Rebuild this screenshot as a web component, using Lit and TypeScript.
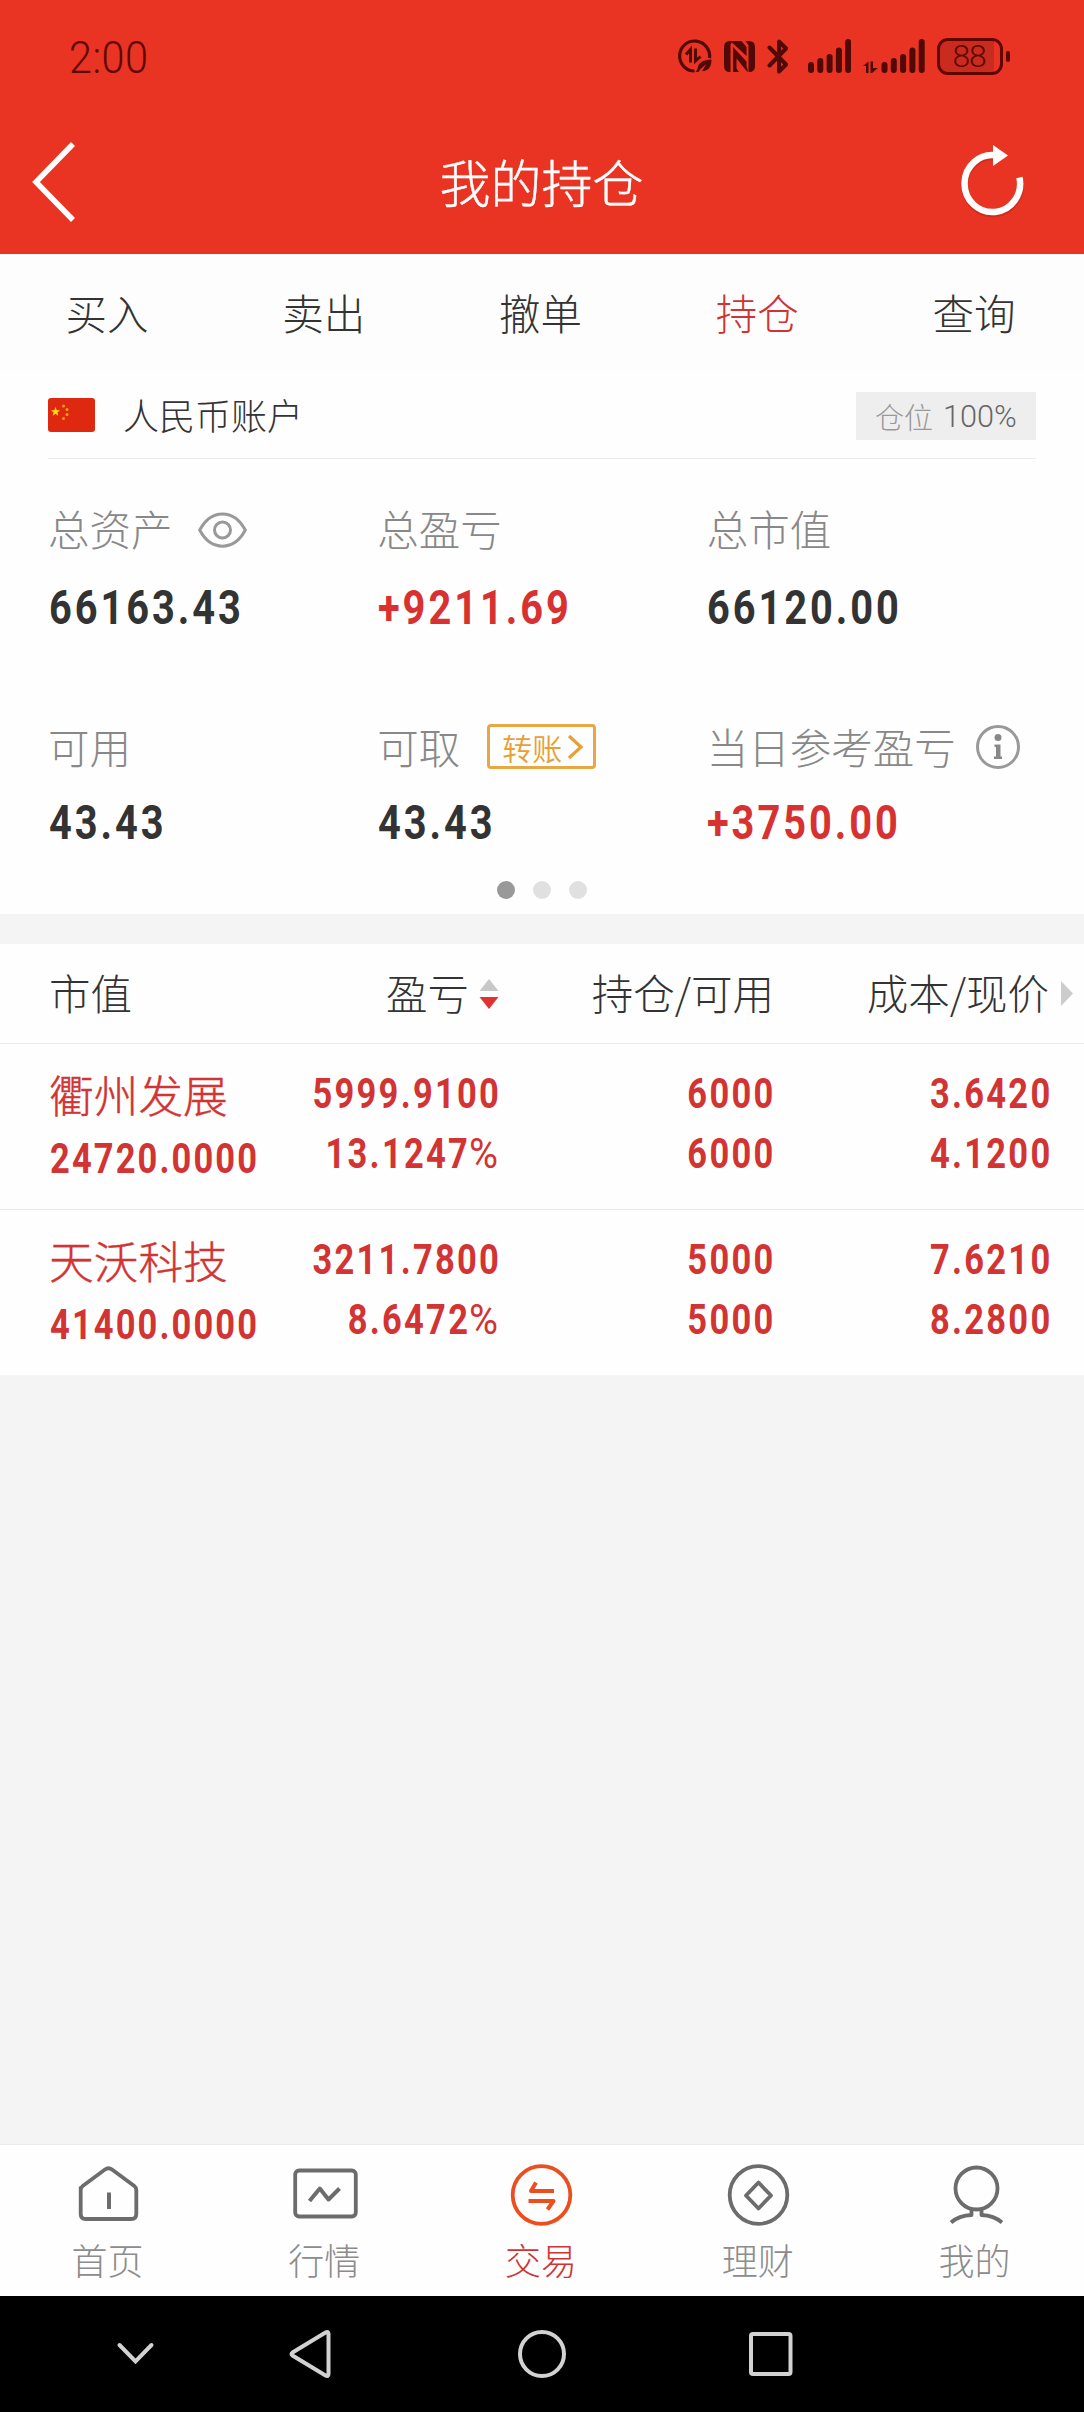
import { LitElement, html, css, svg } from "lit";
import { customElement } from "lit/decorators.js";
import { classMap } from "lit/directives/class-map.js";

interface Holding {
  name: string;
  value: string;
  profit: string;
  rate: string;
  held: string;
  usable: string;
  cost: string;
  price: string;
}

const HOLDINGS: Holding[] = [
  { name: "衢州发展", value: "24720.0000", profit: "5999.9100", rate: "13.1247", held: "6000", usable: "6000", cost: "3.6420", price: "4.1200" },
  { name: "天沃科技", value: "41400.0000", profit: "3211.7800", rate: "8.6472", held: "5000", usable: "5000", cost: "7.6210", price: "8.2800" },
];

const TABS = ["买入", "卖出", "撤单", "持仓", "查询"];

const BARS = [
  [0, 23], [9.3, 19], [18.6, 15], [27.9, 8.5], [37.2, 0],
];
const bars = svg`${BARS.map(([x, y]) => svg`<rect x=${x} y=${y} width="6" height=${34 - y} rx="3"/>`)}`;

const NAV = [
  {
    label: "首页",
    icon: svg`<path d="M6.700 25.500 V53 Q6.700 58 11.700 58 H57.300 Q62.300 58 62.300 53 V29 Q62.300 26.500 60.300 25 L38 8.500 Q34.500 6 31 8.500 L8.700 25 Q6.700 26.500 6.700 29"/><path d="M35 31.500V48" stroke-width="4"/>`,
  },
  {
    label: "行情",
    icon: svg`<rect x="4.200" y="9.500" width="60.600" height="46" rx="4"/><path d="M18.500 40 L28.800 27.500 L37.500 38.500 L48.500 27.500" stroke-width="4"/>`,
  },
  {
    label: "交易",
    icon: svg`<circle cx="34.500" cy="34" r="28.800"/><path d="M47 30H24L29 21.500M21.500 40H46.500L40.500 48.500" stroke-width="4"/>`,
  },
  {
    label: "理财",
    icon: svg`<circle cx="34.500" cy="34" r="28.800"/><path d="M34.500 21.500L47 34.500L34.500 47.500L22 34.500Z"/>`,
  },
  {
    label: "我的",
    icon: svg`<circle cx="35.500" cy="27.500" r="21"/><path d="M30.500 48.500V54Q18 54.500 10 61.500M40.500 48.500V54Q53 54.500 61 61.500"/>`,
  },
];

@customElement("app-root")
export class AppRoot extends LitElement {
  static styles = css`
    :host {
      display: flex;
      flex-direction: column;
      width: 1084px;
      height: 2412px;
      overflow: hidden;
      background: #f4f4f4;
      color: #333;
      font-family: "Noto Sans CJK SC", sans-serif;
      font-weight: 300;
      font-size: 41.500px;
    }
    * { box-sizing: border-box; }
    svg { display: block; flex: none; }
    .top { background: #e93423; height: 254px; flex: none; }
    .status {
      height: 112px;
      padding: 0 74px 0 69px;
      display: flex;
      align-items: center;
      color: #510905;
    }
    .clock {
      font: 300 45px/50px Roboto, sans-serif;
      letter-spacing: 0.500px;
      color: #600500;
      transform: scaleX(0.92);
      transform-origin: 0 50%;
      margin-right: auto;
      padding-top: 4px;
    }
    .status svg { fill: currentColor; }
    .s-data { margin-right: 12px; }
    .s-nfc { margin-right: 12px; }
    .s-bt { margin-right: 19px; }
    .s-sig { margin-right: 12px; }
    .s-sig2 { margin-right: 12px; }
    .bat { display: flex; align-items: center; }
    .cell {
      width: 66px;
      height: 37px;
      border: 3px solid #600500;
      border-radius: 11px;
      background: linear-gradient(90deg, #c92c1f 54px, transparent 54px);
      font: 300 32px/31px Roboto, sans-serif;
      text-align: center;
      color: #600500;
      letter-spacing: -1.200px;
      padding-right: 2px;
    }
    .nub { width: 4px; height: 11px; border-radius: 2px; background: #600500; margin-left: 3px; }
    .title {
      height: 142px;
      display: flex;
      align-items: center;
      justify-content: space-between;
      padding: 0 57px 0 30px;
      color: #fff;
    }
    .title h1 { margin: 0 0 0 19px; font-size: 51px; font-weight: 300; -webkit-text-stroke: 0.400px; line-height: 60px; padding-bottom: 5px; }
    .reload { margin-bottom: 4px; }
    .back { margin-right: 29px; margin-bottom: 2px; }
    .tabs { display: flex; height: 118px; background: #fdfdfd; flex: none; }
    .tabs div { flex: 1; text-align: center; line-height: 117px; padding-right: 3px; }
    .on { color: #cf3434; }
    .panel { background: #fefefe; padding: 0 48px; height: 542px; flex: none; }
    .acct { height: 87px; display: flex; align-items: center; border-bottom: 1px solid #ebebeb; }
    .acct b { font-weight: 300; font-size: 36px; margin-left: 28px; padding-bottom: 3px; }
    .tag {
      margin-left: auto;
      margin-top: 1px;
      width: 180px;
      height: 48px;
      background: #eee;
      color: #999;
      font-size: 29px;
      line-height: 44px;
      padding-left: 19px;
      display: flex;
      align-items: center;
      gap: 10px;
    }
    .tag i {
      font: 300 32px/48px Roboto, sans-serif;
      color: #666;
      transform: scaleX(0.96);
      transform-origin: 0 50%;
    }
    .grid { display: grid; grid-template-columns: repeat(3, 1fr); padding-top: 40px; }
    .stat { height: 216px; white-space: nowrap; }
    .lbl { height: 60px; display: flex; align-items: center; color: #888; line-height: 54px; }
    .lbl > span { padding-bottom: 2px; }
    .num {
      font: 700 48.500px/56px Roboto, sans-serif;
      letter-spacing: 3.600px;
      transform: scaleX(0.82);
      transform-origin: 0 50%;
      margin: 21px 0 0 0.500px;
    }
    .stat.low .lbl { padding-top: 3px; }
    .stat.low .num { margin-top: 20px; }
    .up { color: #d83131; }
    .eye { margin: 1px 0 0 25px; }
    .info { margin-left: 19px; }
    .transfer {
      margin-left: 27px;
      width: 109px;
      height: 45px;
      border: 3px solid #e6a744;
      border-radius: 4px;
      color: #e8a033;
      font-size: 30px;
      font-weight: 350;
      line-height: 36px;
      display: flex;
      align-items: center;
      padding-left: 12px;
      gap: 5px;
    }
    .dots { display: flex; gap: 18px; justify-content: center; margin-top: -50px; }
    .dots span { width: 18px; height: 18px; border-radius: 50%; background: #e0e0e0; }
    .dots span:first-child { background: #999; }
    .table { margin-top: 30px; background: #fefefe; flex: none; }
    .row { display: grid; grid-template-columns: 250px 200px 275px 276px; padding-left: 49px; }
    .item > div { display: flex; flex-direction: column; align-items: flex-end; }
    .item > div:first-child { align-items: flex-start; }
    .head { height: 100px; border-bottom: 1px solid #ebebeb; line-height: 92px; white-space: nowrap; }
    .head > div { display: flex; align-items: center; justify-content: flex-end; }
    .head > div > span { padding-bottom: 3px; }
    .head > div:first-child { justify-content: flex-start; }
    .sort { margin-left: 10px; }
    .more { margin: 0 -24px 0 12px; }
    .item { height: 165px; color: #d23333; padding-top: 20px; }
    .item + .item { height: 166px; border-top: 1px solid #ebebeb; }
    .name { font-size: 44.700px; -webkit-text-stroke: 0.400px; line-height: 60px; height: 65px; }
    .fig {
      font: 700 42px/60px Roboto, sans-serif;
      letter-spacing: 2.800px;
      margin-right: -2px;
      transform: scaleX(0.82);
      transform-origin: 100% 50%;
      white-space: nowrap;
    }
    .fig.left { transform-origin: 0 50%; margin-left: 0.500px; letter-spacing: 2.600px; }
    .fig em {
      display: inline-block;
      font-style: normal;
      font-weight: 400;
      transform: scaleX(1.15);
      transform-origin: 100% 50%;
      margin-left: 4px;
    }
    .nav { margin-top: auto; height: 152px; border-top: 1px solid #eaeaea; background: #fefefe; display: flex; flex: none; }
    .nav > div { flex: 1; display: flex; flex-direction: column; align-items: center; padding-top: 16px; font-size: 36px; color: #8c8c8c; }
    .nav svg { fill: none; stroke: #6c6c6c; stroke-width: 3.800; }
    .nav .on { color: #cf3434; }
    .nav .on svg { stroke: #eb4f20; }
    .nav span { line-height: 54px; margin: 1px 2px 0 0; }
    .sys { height: 116px; background: #000; flex: none; display: flex; align-items: center; padding-left: 115px; }
    .sys svg { fill: none; stroke: #d2d2d2; stroke-width: 4; }
    .s1 { margin-right: 132px; }
    .s2 { margin-right: 184px; }
    .s3 { margin-right: 179px; }
  `;

  private fig(text: string, unit = "") {
    return html`<div class="fig">${text}${unit ? html`<em>${unit}</em>` : ""}</div>`;
  }

  render() {
    return html`
      <div class="top">
        <div class="status">
          <span class="clock">2:00</span>
          <svg class="s-data" width="34" height="34" viewBox="0 0 34 34">
            <path d="M31.500 19A15 15 0 1 0 16.500 32" fill="none" stroke="currentColor" stroke-width="3.200"/>
            <path d="M8 15.500L12.500 10.500V23.500M17.500 9.500V22L22.500 17.500" fill="none" stroke="currentColor" stroke-width="3"/>
            <path d="M33.500 20.500C25 21 20 23.500 19.500 30L17.500 33H20.500L22.500 30L28.500 25L24 32C31 32.500 33.500 27 33.500 20.500Z"/>
          </svg>
          <svg class="s-nfc" width="31" height="31" viewBox="0 0 31 31">
            <path d="M6 0H17.500L22.500 6V15L8 1.500L6.500 3V31H6Q0 31 0 25V6Q0 0 6 0ZM21.500 0H25Q31 0 31 6V25Q31 31 25 31H24.500V4ZM9 6L22.500 20.500V25L24 30.500H23L12.500 17.500V27.500L15 31H9Z"/>
          </svg>
          <svg class="s-bt" width="22" height="35" viewBox="0 0 22 35">
            <path d="M2.500 8.500L19 25.500L12 32.500V2.500L19 9.500L2.500 26.500" fill="none" stroke="currentColor" stroke-width="4" stroke-linejoin="round" stroke-linecap="round"/>
          </svg>
          <svg class="s-sig" width="43" height="34" viewBox="0 0 43 34">${bars}</svg>
          <svg class="s-sig2" width="62" height="34" viewBox="0 0 62 34">
            <path d="M0 27L5.500 22.500V34H3V27ZM7.500 22.500H10V29H15L9 34H7.500Z"/>
            <g transform="translate(18.500 0)">${bars}</g>
          </svg>
          <div class="bat"><div class="cell">88</div><div class="nub"></div></div>
        </div>
        <div class="title">
          <svg class="back" width="48" height="84" viewBox="0 0 48 84">
            <path d="M43 4L6 42L43 80" fill="none" stroke="#fff" stroke-width="5.500"/>
          </svg>
          <h1>我的持仓</h1>
          <svg class="reload" width="70" height="76" viewBox="0 0 70 76">
            <path d="M64 35.500A28 28.500 0 1 1 41 13.500" transform="translate(-1 1)" fill="none" stroke="#a91b10" stroke-opacity=".35" stroke-width="6.500"/>
            <path d="M63.500 34.500A27.800 28.500 0 1 1 40 12.300" transform="translate(-1 0)" fill="none" stroke="#fff" stroke-width="6.500"/>
            <path d="M36 2L51 12.500L36 23Z" fill="#fff"/>
          </svg>
        </div>
      </div>

      <div class="tabs">
        ${TABS.map((t) => html`<div class=${classMap({ on: t === "持仓" })}>${t}</div>`)}
      </div>

      <div class="panel">
        <div class="acct">
          <svg width="47" height="34" viewBox="0 0 47 34">
            <rect width="47" height="34" rx="3" fill="#de2910"/>
            <path d="M7.500 9L8.700 12.300H12L9.400 14.400L10.300 17.800L7.500 15.800L4.700 17.800L5.600 14.400L3 12.300H6.300Z" fill="#ffde00"/>
            <g fill="#f0a010"><circle cx="15.500" cy="8" r="1.500"/><circle cx="19" cy="11.500" r="1.500"/><circle cx="19" cy="16.500" r="1.500"/><circle cx="15.500" cy="20.500" r="1.500"/></g>
          </svg>
          <b>人民币账户</b>
          <div class="tag">仓位<i>100%</i></div>
        </div>
        <div class="grid">
          <div class="stat">
            <div class="lbl"><span>总资产</span>
              <svg class="eye" width="49" height="36" viewBox="0 0 49 36" fill="none" stroke="#999" stroke-width="3">
                <path d="M1.700 18C13 -3.500 36 -3.500 47.300 18C36 39.500 13 39.500 1.700 18Z"/><circle cx="24.500" cy="18" r="8"/>
              </svg>
            </div>
            <div class="num">66163.43</div>
          </div>
          <div class="stat"><div class="lbl"><span>总盈亏</span></div><div class="num up">+9211.69</div></div>
          <div class="stat"><div class="lbl"><span>总市值</span></div><div class="num">66120.00</div></div>
          <div class="stat low"><div class="lbl"><span>可用</span></div><div class="num">43.43</div></div>
          <div class="stat low">
            <div class="lbl"><span>可取</span>
              <div class="transfer">转账
                <svg width="17" height="26" viewBox="0 0 17 26"><path d="M2 2L14 13L2 24" fill="none" stroke="#e8a033" stroke-width="3.200"/></svg>
              </div>
            </div>
            <div class="num">43.43</div>
          </div>
          <div class="stat low">
            <div class="lbl"><span>当日参考盈亏</span>
              <svg class="info" width="46" height="46" viewBox="0 0 46 46">
                <circle cx="23" cy="23" r="20.500" fill="none" stroke="#999" stroke-width="3"/>
                <circle cx="23" cy="13.500" r="3.500" fill="#888"/>
                <path d="M19.500 20.500H25.500V32.500H27V35H19V32.500H21V23H19.500Z" fill="#888"/>
              </svg>
            </div>
            <div class="num up">+3750.00</div>
          </div>
        </div>
        <div class="dots"><span></span><span></span><span></span></div>
      </div>

      <div class="table">
        <div class="row head">
          <div><span>市值</span></div>
          <div><span>盈亏</span>
            <svg class="sort" width="20" height="30" viewBox="0 0 20 30"><path d="M10 0L19.500 12H.5Z" fill="#c8c8c8"/><path d="M10 30L19.500 18H.5Z" fill="#e23230"/></svg>
          </div>
          <div><span>持仓/可用</span></div>
          <div><span>成本/现价</span>
            <svg class="more" width="13" height="25" viewBox="0 0 13 25"><path d="M0 0L12 12.500L0 25Z" fill="#ccc"/></svg>
          </div>
        </div>
        ${HOLDINGS.map(
          (h) => html`
            <div class="row item">
              <div><div class="name">${h.name}</div><div class="fig left">${h.value}</div></div>
              <div>${this.fig(h.profit)}${this.fig(h.rate, "%")}</div>
              <div>${this.fig(h.held)}${this.fig(h.usable)}</div>
              <div>${this.fig(h.cost)}${this.fig(h.price)}</div>
            </div>
          `
        )}
      </div>

      <div class="nav">
        ${NAV.map(
          (n) => html`<div class=${classMap({ on: n.label === "交易" })}>
            <svg width="69" height="70" viewBox="0 0 69 70" stroke-linejoin="round">${n.icon}</svg><span>${n.label}</span>
          </div>`
        )}
      </div>

      <div class="sys">
        <svg class="s1" width="41" height="26" viewBox="0 0 41 26"><path d="M4.500 4L20.500 20.500L36.500 4" stroke-linecap="round"/></svg>
        <svg class="s2" width="44" height="52" viewBox="0 0 44 52"><path d="M4.500 24.500L37.500 4.500Q40.500 3 40.500 6V46Q40.500 49 37.500 47.500L4.500 27.500Q2.500 26 4.500 24.500Z"/></svg>
        <svg class="s3" width="52" height="52" viewBox="0 0 52 52"><circle cx="26" cy="26" r="22"/></svg>
        <svg width="48" height="48" viewBox="0 0 48 48"><rect x="4" y="4" width="39.500" height="40" rx="2"/></svg>
      </div>
    `;
  }
}
